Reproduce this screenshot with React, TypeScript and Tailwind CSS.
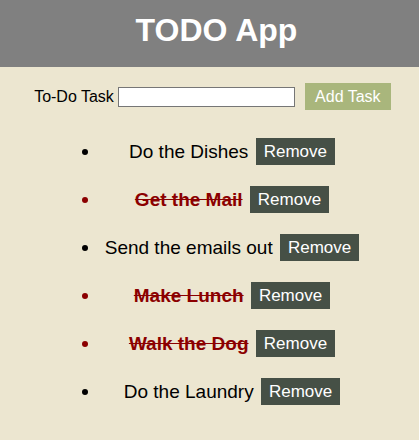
import { useState } from "react";

type Task = { id: number; text: string; done: boolean };

const initialTasks: Task[] = [
  { id: 1, text: "Do the Dishes", done: false },
  { id: 2, text: "Get the Mail", done: true },
  { id: 3, text: "Send the emails out", done: false },
  { id: 4, text: "Make Lunch", done: true },
  { id: 5, text: "Walk the Dog", done: true },
  { id: 6, text: "Do the Laundry", done: false },
];

const App = () => {
  const [tasks, setTasks] = useState<Task[]>(initialTasks);
  const [value, setValue] = useState("");

  const addTask = () => {
    if (!value.trim()) return;
    setTasks([...tasks, { id: Date.now(), text: value, done: false }]);
    setValue("");
  };

  return (
    <div className="min-h-screen bg-[#ece6d0] font-['Liberation_Sans',Arial,sans-serif] text-black">
      <div className="h-[67px] bg-[#808080] flex items-center justify-center pl-[14px]">
        <h1 className="text-[32px] font-bold text-white -mt-[8px]">TODO App</h1>
      </div>

      <div className="flex items-center justify-center mt-4 ml-[6px] h-[27px]">
        <label className="text-[16px] mr-[4px]">To-Do Task</label>
        <input
          className="w-[177px] h-[20px] bg-white border border-[#767676] outline-none px-1 text-[14px]"
          value={value}
          onChange={(e) => setValue(e.target.value)}
        />
        <button
          className="ml-[10px] h-[27px] w-[86px] bg-[#a9b67c] text-white text-[16px]"
          onClick={addTask}
        >
          Add Task
        </button>
      </div>

      <ul className="list-disc ml-[60px] w-[304px] pl-10 mt-[17px]">
        {tasks.map((t) => (
          <li
            key={t.id}
            className={`text-center h-12 leading-[48px] text-[19px] ${t.done ? "text-[#8b0000]" : ""}`}
          >
            <span
              className={`align-middle ${t.done ? "font-bold line-through" : ""}`}
              onClick={() =>
                setTasks(tasks.map((x) => (x.id === t.id ? { ...x, done: !x.done } : x)))
              }
            >
              {t.text}
            </span>{" "}
            <button
              className="align-middle leading-normal ml-[2px] h-[27px] px-[8px] bg-[#465046] text-white text-[17px]"
              onClick={() => setTasks(tasks.filter((x) => x.id !== t.id))}
            >
              Remove
            </button>
          </li>
        ))}
      </ul>
    </div>
  );
};

export default App;
